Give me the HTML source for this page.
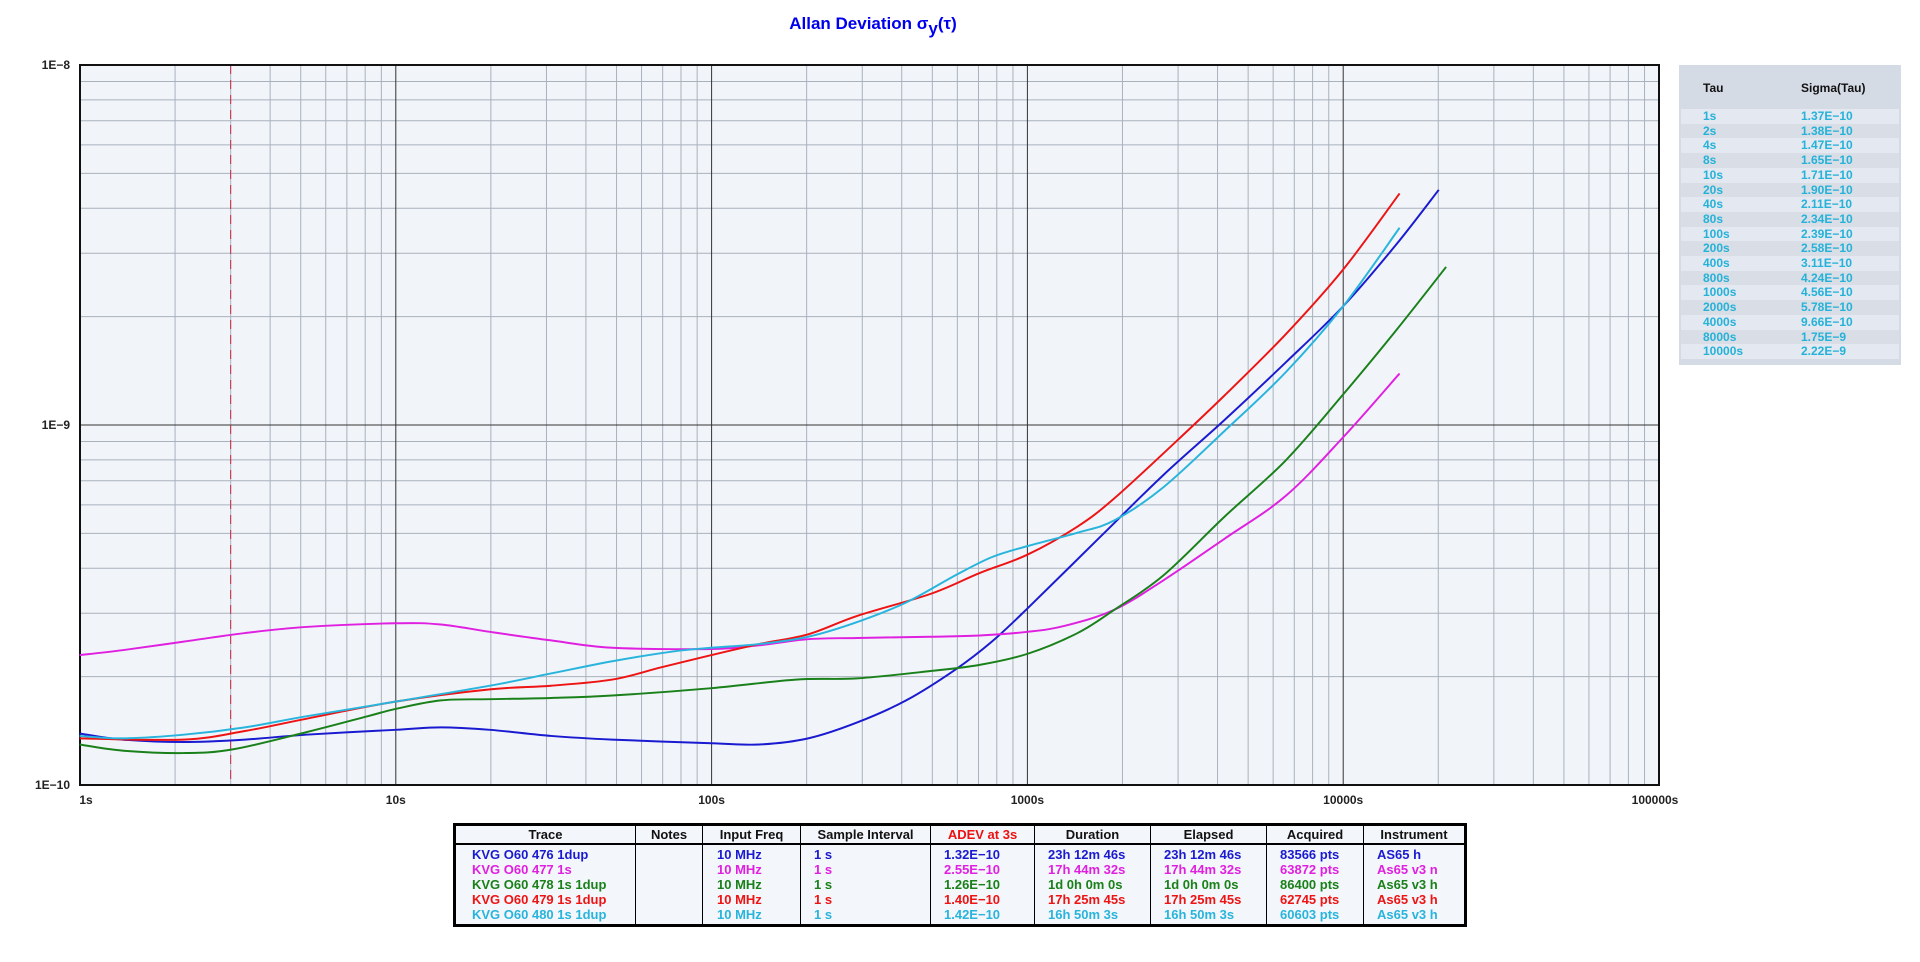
<!DOCTYPE html>
<html><head><meta charset="utf-8"><style>
html,body{margin:0;padding:0;background:#fff;width:1920px;height:962px;overflow:hidden;font-family:"Liberation Sans",Arial,sans-serif}
#t{position:absolute;left:0;width:1746px;top:14px;text-align:center;color:#0000ee;font-weight:bold;font-size:17px}
#panel{position:absolute;left:1679px;top:65px;width:222px;height:300px;background:#d5dbe5}
#panel .h{position:absolute;top:16px;font-weight:bold;font-size:12px;color:#111}
.r{position:absolute;left:2px;width:218px;height:15px;font-weight:bold;font-size:12px;color:#25b2d8;line-height:15px}
.r span{position:absolute}
table{position:absolute;left:453px;top:823px;width:1014px;border-collapse:collapse;border:3px solid #000;background:#f3f6fa;font-weight:bold;font-size:13px}
td,th{padding:0;border-left:1px solid #000}
th{height:17px;border-bottom:2px solid #000;color:#111;font-size:13px}
td{line-height:15px;vertical-align:top;padding-top:2px;padding-bottom:2px}
</style></head><body>
<div id="t">Allan Deviation σ<sub style="font-size:17px;vertical-align:-5px">y</sub>(τ)</div>
<svg id="s" width="1920" height="962" style="position:absolute;left:0;top:0"></svg>
<div id="panel">
<div class="h" style="left:24px">Tau</div><div class="h" style="left:122px">Sigma(Tau)</div>
</div>
<table>
<tr><th style="width:179px">Trace</th><th style="width:66px">Notes</th><th style="width:97px">Input Freq</th><th style="width:129px">Sample Interval</th><th style="width:103px;color:#ee1111">ADEV at 3s</th><th style="width:115px">Duration</th><th style="width:115px">Elapsed</th><th style="width:96px">Acquired</th><th>Instrument</th></tr>
<tr>
<td style="padding-left:16px"><div style="color:#1a1ad0">KVG O60 476 1dup</div><div style="color:#e020e0">KVG O60 477 1s</div><div style="color:#1a801a">KVG O60 478 1s 1dup</div><div style="color:#ee1414">KVG O60 479 1s 1dup</div><div style="color:#28b4dc">KVG O60 480 1s 1dup</div></td>
<td></td>
<td style="padding-left:14px"><div style="color:#1a1ad0">10 MHz</div><div style="color:#e020e0">10 MHz</div><div style="color:#1a801a">10 MHz</div><div style="color:#ee1414">10 MHz</div><div style="color:#28b4dc">10 MHz</div></td>
<td style="padding-left:13px"><div style="color:#1a1ad0">1 s</div><div style="color:#e020e0">1 s</div><div style="color:#1a801a">1 s</div><div style="color:#ee1414">1 s</div><div style="color:#28b4dc">1 s</div></td>
<td style="padding-left:13px"><div style="color:#1a1ad0">1.32E−10</div><div style="color:#e020e0">2.55E−10</div><div style="color:#1a801a">1.26E−10</div><div style="color:#ee1414">1.40E−10</div><div style="color:#28b4dc">1.42E−10</div></td>
<td style="padding-left:13px"><div style="color:#1a1ad0">23h 12m 46s</div><div style="color:#e020e0">17h 44m 32s</div><div style="color:#1a801a">1d 0h 0m 0s</div><div style="color:#ee1414">17h 25m 45s</div><div style="color:#28b4dc">16h 50m 3s</div></td>
<td style="padding-left:13px"><div style="color:#1a1ad0">23h 12m 46s</div><div style="color:#e020e0">17h 44m 32s</div><div style="color:#1a801a">1d 0h 0m 0s</div><div style="color:#ee1414">17h 25m 45s</div><div style="color:#28b4dc">16h 50m 3s</div></td>
<td style="padding-left:13px"><div style="color:#1a1ad0">83566 pts</div><div style="color:#e020e0">63872 pts</div><div style="color:#1a801a">86400 pts</div><div style="color:#ee1414">62745 pts</div><div style="color:#28b4dc">60603 pts</div></td>
<td style="padding-left:13px"><div style="color:#1a1ad0">AS65 h</div><div style="color:#e020e0">As65 v3 n</div><div style="color:#1a801a">As65 v3 h</div><div style="color:#ee1414">As65 v3 h</div><div style="color:#28b4dc">As65 v3 h</div></td>
</tr></table>
<script>
var s=document.getElementById('s'),h='';
var L=80,R=1659,T=65,B=785,dx=315.8,dy=360;
h+='<rect x="'+L+'" y="'+T+'" width="'+(R-L)+'" height="'+(B-T)+'" fill="#f1f5fa"/>';
for(var d=0;d<5;d++)for(var k=2;k<10;k++){var x=L+dx*(d+Math.log10(k));h+='<line x1="'+x+'" y1="'+T+'" x2="'+x+'" y2="'+B+'" stroke="#a9b1bd" stroke-width="1"/>';}
for(var d=0;d<2;d++)for(var k=2;k<10;k++){var y=B-dy*(d+Math.log10(k));h+='<line x1="'+L+'" y1="'+y+'" x2="'+R+'" y2="'+y+'" stroke="#a9b1bd" stroke-width="1"/>';}
for(var d=1;d<5;d++){var x=L+dx*d;h+='<line x1="'+x+'" y1="'+T+'" x2="'+x+'" y2="'+B+'" stroke="#333" stroke-width="1"/>';}
h+='<line x1="'+L+'" y1="425" x2="'+R+'" y2="425" stroke="#333" stroke-width="1"/>';
var x3=L+dx*Math.log10(3);h+='<line x1="'+x3+'" y1="'+T+'" x2="'+x3+'" y2="'+B+'" stroke="#c8283c" stroke-width="1" stroke-dasharray="9,6"/>';
h+='<rect x="'+L+'" y="'+T+'" width="'+(R-L)+'" height="'+(B-T)+'" fill="none" stroke="#111" stroke-width="2"/>';
var yl=[['1E−8',T],['1E−9',425],['1E−10',B]];
yl.forEach(function(a){h+='<text x="70" y="'+(a[1]+4)+'" text-anchor="end" font-family="Liberation Sans,Arial" font-weight="bold" font-size="12" fill="#222">'+a[0]+'</text>';});
['1s','10s','100s','1000s','10000s','100000s'].forEach(function(t,i){h+='<text x="'+(L+dx*i+(i==0?6:(i==5?-4:0)))+'" y="804" text-anchor="middle" font-family="Liberation Sans,Arial" font-weight="bold" font-size="12" fill="#222">'+t+'</text>';});
var C={
'#1a1ad0':[65,599,100,604,150,606,200,604,250,600,323,596,360,594,400,596,450,601,500,604,581,607,620,608,660,603,700,590,740,572,780,547,810,524,839,497,900,437,950,388,1000,343,1050,296,1097,250,1140,200,1175,155],
'#e020e0':[65,535,100,531,150,524,200,517,250,512,323,509,360,510,400,516,450,523,500,529,581,530,620,527,660,522,700,521,760,520,800,519,839,516,870,511,910,498,950,474,1000,440,1050,405,1097,357,1143,305],
'#1a801a':[65,608,100,613,150,615,190,612,250,598,300,585,323,579,360,572,400,571,450,570,500,568,581,562,650,555,700,554,760,548,800,543,839,534,880,517,910,498,950,470,1000,422,1050,376,1097,322,1140,270,1181,218],
'#ee1414':[65,603,150,604,200,597,250,587,323,573,400,563,450,560,500,555,540,545,581,535,620,526,660,518,700,503,760,485,800,468,839,453,880,430,910,407,960,361,1000,323,1050,273,1097,220,1143,158],
'#28b4dc':[65,601,100,603,150,600,200,594,250,585,323,573,400,560,450,550,500,540,550,532,581,529,620,526,660,520,700,508,740,492,780,470,810,455,839,446,880,435,910,425,950,398,1000,352,1050,304,1097,250,1143,186]};
function smooth(a){var p=[];for(var i=0;i<a.length;i+=2)p.push([a[i],a[i+1]]);var d='M'+p[0][0]+','+p[0][1];
for(var i=0;i<p.length-1;i++){var p0=p[i-1]||p[i],p1=p[i],p2=p[i+1],p3=p[i+2]||p2;
d+=' C'+(p1[0]+(p2[0]-p0[0])/6)+','+(p1[1]+(p2[1]-p0[1])/6)+' '+(p2[0]-(p3[0]-p1[0])/6)+','+(p2[1]-(p3[1]-p1[1])/6)+' '+p2[0]+','+p2[1];}return d;}
h+='<g transform="scale(1.22449)">';
for(var c in C){h+='<path d="'+smooth(C[c])+'" fill="none" stroke="'+c+'" stroke-width="1.6" stroke-linejoin="round"/>';}
h+='</g>';
s.innerHTML=h;
var P=document.getElementById('panel'),ta=['1s','2s','4s','8s','10s','20s','40s','80s','100s','200s','400s','800s','1000s','2000s','4000s','8000s','10000s'],
sg=['1.37E−10','1.38E−10','1.47E−10','1.65E−10','1.71E−10','1.90E−10','2.11E−10','2.34E−10','2.39E−10','2.58E−10','3.11E−10','4.24E−10','4.56E−10','5.78E−10','9.66E−10','1.75E−9','2.22E−9'],q='';
for(var i=0;i<17;i++)q+='<div class="r" style="top:'+(44+i*14.7)+'px;background:'+(i%2?'#d8dde6':'#e3e8f1')+'"><span style="left:22px">'+ta[i]+'</span><span style="left:120px">'+sg[i]+'</span></div>';
P.innerHTML+=q;
</script>
</body></html>
